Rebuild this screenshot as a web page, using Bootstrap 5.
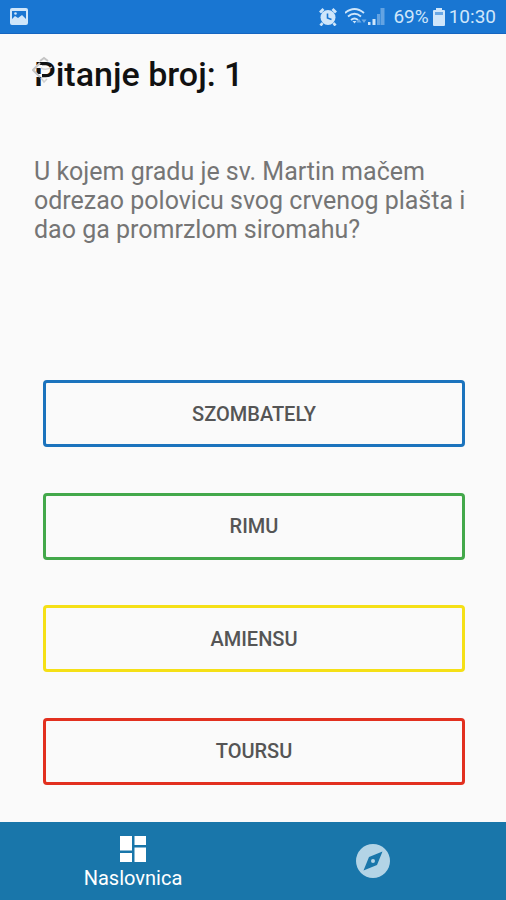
<!DOCTYPE html>
<html lang="hr">
<head>
<meta charset="utf-8">
<meta name="viewport" content="width=device-width, initial-scale=1">
<title>Kviz</title>
<link href="https://cdn.jsdelivr.net/npm/bootstrap@5.3.0/dist/css/bootstrap.min.css" rel="stylesheet">
<style>
body{font-family:Roboto,"Liberation Sans",sans-serif;background:#fafafa;color:#111}
.status-bar{background:#1976d2;height:34px;color:#cfe6fa;font-size:19px;line-height:34px;padding:0 10px;border-bottom:1px solid #1565c0}
.status-bar svg{flex:none}
.quiz-title{font-size:34px;line-height:40px;font-weight:500;color:#111}
.quiz-main{padding:20px 34px 36px}
.quiz-text{font-size:25px;line-height:29px;color:#757575;margin-top:63px}
.title-mark{left:-2px;top:2px}
.answers{padding:0 7px 0 9px;margin-top:136px;height:405px}
.answer{height:67px;border:3px solid var(--edge);border-radius:4px;background:transparent;color:#555;font-size:20px;font-weight:500}
.edge-blue{--edge:#1b73bd}
.edge-green{--edge:#43a84a}
.edge-yellow{--edge:#f5e016}
.edge-red{--edge:#e2301f}
.tab-bar{background:#1976aa;height:78px;font-size:20px;line-height:24px}
.tab-link,.tab-link:hover{color:#fff;width:240px}
.tab-link svg{display:block}
.tab-label{margin-top:4px}
.tab-home{padding-top:4px}
</style>
</head>
<body class="min-vh-100 d-flex flex-column">
<header class="status-bar d-flex align-items-center justify-content-between">
  <svg width="18" height="17" viewBox="0 0 18 17" aria-hidden="true"><path fill="#cfe6fa" fill-rule="evenodd" d="M2 0h14q2 0 2 2v13q0 2-2 2H2q-2 0-2-2V2q0-2 2-2zM2 3v8l3-3 3 2 4-3 4 4V3z"/><circle cx="5.5" cy="5.5" r="1.3" fill="#cfe6fa"/></svg>
  <div class="d-flex align-items-center">
    <svg class="me-2" width="18" height="18" viewBox="0 0 18 18" aria-hidden="true"><circle cx="9" cy="9.5" r="7.5" fill="#cfe6fa"/><path d="M1 4.5L4.5 1M17 4.5L13.500 1M3.500 15L1.500 17.500M14.500 15L16.500 17.500" stroke="#cfe6fa" stroke-width="2.800"/><path d="M8.500 5.500v4.500l4 1.500" fill="none" stroke="#1976d2" stroke-width="1.600"/></svg>
    <svg width="23" height="18" viewBox="0 0 23 18" aria-hidden="true"><path d="M0 5Q9.500-3 19 5M3 8.500q6.500-5.500 13 0M6 12q3.500-3 7 0" fill="none" stroke="#cfe6fa" stroke-width="1.900"/><path d="M7.500 13h4l-2 2.500z" fill="#cfe6fa"/><path d="M14 11l2.500 3.500h-5zM19 15l-2.500-3.500h5z" fill="#6daae5"/></svg>
    <svg class="me-2" width="17" height="17" viewBox="0 0 17 17" aria-hidden="true"><path d="M0 17v-3h2.500v3zM4.500 17v-6h3v6z" fill="#cfe6fa"/><path d="M9 17V6h3v11zM12.500 17V0h4v17z" fill="#63a3e2"/></svg>
    <span>69%</span>
    <svg class="ms-1 me-1" width="12" height="18" viewBox="0 0 12 18" aria-hidden="true"><path fill="#cfe6fa" d="M3 0h6v2h2q1 0 1 1v14q0 1-1 1H1q-1 0-1-1V3q0-1 1-1h2z"/><path d="M2 4h8v3H2z" fill="#69a8e5"/></svg>
    <span>10:30</span>
  </div>
</header>
<main class="quiz-main flex-grow-1">
  <div class="position-relative">
    <h1 class="quiz-title mb-0">Pitanje broj: 1</h1>
    <svg class="title-mark position-absolute" width="26" height="30" viewBox="0 0 26 30" aria-hidden="true"><path d="M2 9h8v3H2zM2 18h8v3H2z" fill="#fafafa"/><path d="M8 7L1 14l7 7M8 5l4-3 4 3" fill="none" stroke="#c4c4c4" stroke-width="2"/><path d="M9 12q5 3 11-1M9 22l3 4 3-3" fill="none" stroke="#d2d2d2" stroke-width="1.500"/></svg>
  </div>
  <p class="quiz-text mb-0">U kojem gradu je sv. Martin mačem odrezao polovicu svog crvenog plašta i dao ga promrzlom siromahu?</p>
  <div class="answers d-flex flex-column justify-content-between">
    <button type="button" class="answer edge-blue">SZOMBATELY</button>
    <button type="button" class="answer edge-green">RIMU</button>
    <button type="button" class="answer edge-yellow">AMIENSU</button>
    <button type="button" class="answer edge-red">TOURSU</button>
  </div>
</main>
<nav class="tab-bar d-flex justify-content-center">
  <a href="#" class="tab-link tab-home text-decoration-none d-flex flex-column align-items-center justify-content-center"><svg width="26" height="26" viewBox="0 0 26 26" aria-hidden="true"><path fill="#fff" d="M0 0h12v14.500H0zM14.500 0H26v9H14.500zM0 17h12v9H0zM14.500 11.500H26V26H14.500z"/></svg><span class="tab-label">Naslovnica</span></a>
  <a href="#" class="tab-link text-decoration-none d-flex align-items-center justify-content-center" aria-label="Istraži"><svg width="34" height="34" viewBox="0 0 34 34" aria-hidden="true"><path fill="#b3d4e6" fill-rule="evenodd" d="M17 0a17 17 0 1 1 0 34a17 17 0 1 1 0-34zM26.500 7.500L13 13 7.500 26.500 21 21z"/><circle cx="17" cy="17" r="2" fill="#b3d4e6"/></svg></a>
</nav>
<script src="https://cdn.jsdelivr.net/npm/bootstrap@5.3.0/dist/js/bootstrap.bundle.min.js"></script>
</body>
</html>
